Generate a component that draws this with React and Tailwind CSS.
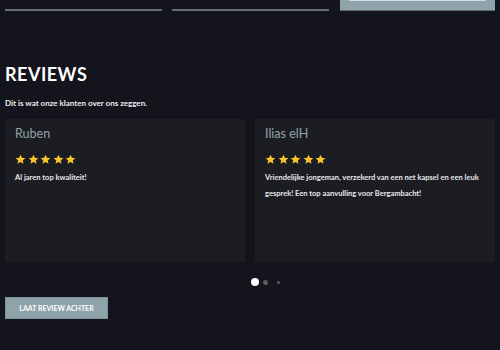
import React from 'react';

const reviews = [
    { name: 'Ruben', text: 'Al jaren top kwaliteit!' },
    { name: 'Ilias elH', text: 'Vriendelijke jongeman, verzekerd van een net kapsel en een leuk gesprek! Een top aanvulling voor Bergambacht!' },
];

function Star() {
    return (
        <svg width="11" height="11" viewBox="0 0 24 24" className="fill-[#f7c52b]">
            <path d="M12 1.5l3.1 6.9 7.4.7-5.6 5 1.7 7.4L12 17.6l-6.6 3.9 1.7-7.4-5.6-5 7.4-.7z" />
        </svg>
    );
}

function ReviewCard({ review }) {
    return (
        <div className="flex-1 h-[143px] bg-[#1c1d22] px-[10px] pt-[7px]">
            <h3 className="text-[12.5px] leading-[16px] text-[#8fa3aa]">{review.name}</h3>
            <div className="flex gap-[1.5px] mt-[12px]">
                {[0, 1, 2, 3, 4].map(i => <Star key={i} />)}
            </div>
            <p className="mt-[5px] text-[7.5px] leading-[16px] font-bold text-[#e8e8ea]">{review.text}</p>
        </div>
    );
}

export default function App() {
    return (
        <div className="w-[500px] h-[350px] overflow-hidden bg-[#13141c] font-['Lato',sans-serif] px-[5px]">
            <div className="flex gap-[10px] h-[11px]">
                <div className="w-[157px] h-[11px] border-b-2 border-[#676f74]" />
                <div className="w-[157px] h-[11px] border-b-2 border-[#676f74]" />
                <div className="ml-[1px] w-[155px] h-[11px] bg-[#8fa3aa] border-b border-[#5d6b70] px-[9px]">
                    <div className="h-[1px] bg-[#d5dcde]" />
                </div>
            </div>

            <h2 className="mt-[52px] text-[18px] leading-[22px] font-bold tracking-[0.5px] text-white">REVIEWS</h2>
            <p className="mt-[12px] text-[8px] leading-[12px] font-bold text-[#ececee]">Dit is wat onze klanten over ons zeggen.</p>

            <div className="flex gap-[10px] mt-[10px]">
                {reviews.map(review => (
                    <ReviewCard key={review.name} review={review} />
                ))}
            </div>

            <div className="flex items-center h-[8px] mt-[16px]">
                <span className="ml-[246px] w-[8px] h-[8px] rounded-full bg-white" />
                <span className="ml-[4px] w-[5px] h-[5px] rounded-full bg-[#5d5e64]" />
                <span className="ml-[9px] w-[3px] h-[3px] rounded-full bg-[#5d5e64]" />
            </div>

            <button className="block mt-[11px] w-[103px] h-[22px] bg-[#8fa3aa] border border-[#7e9197] text-[7px] font-bold text-white">
                LAAT REVIEW ACHTER
            </button>
        </div>
    );
}
